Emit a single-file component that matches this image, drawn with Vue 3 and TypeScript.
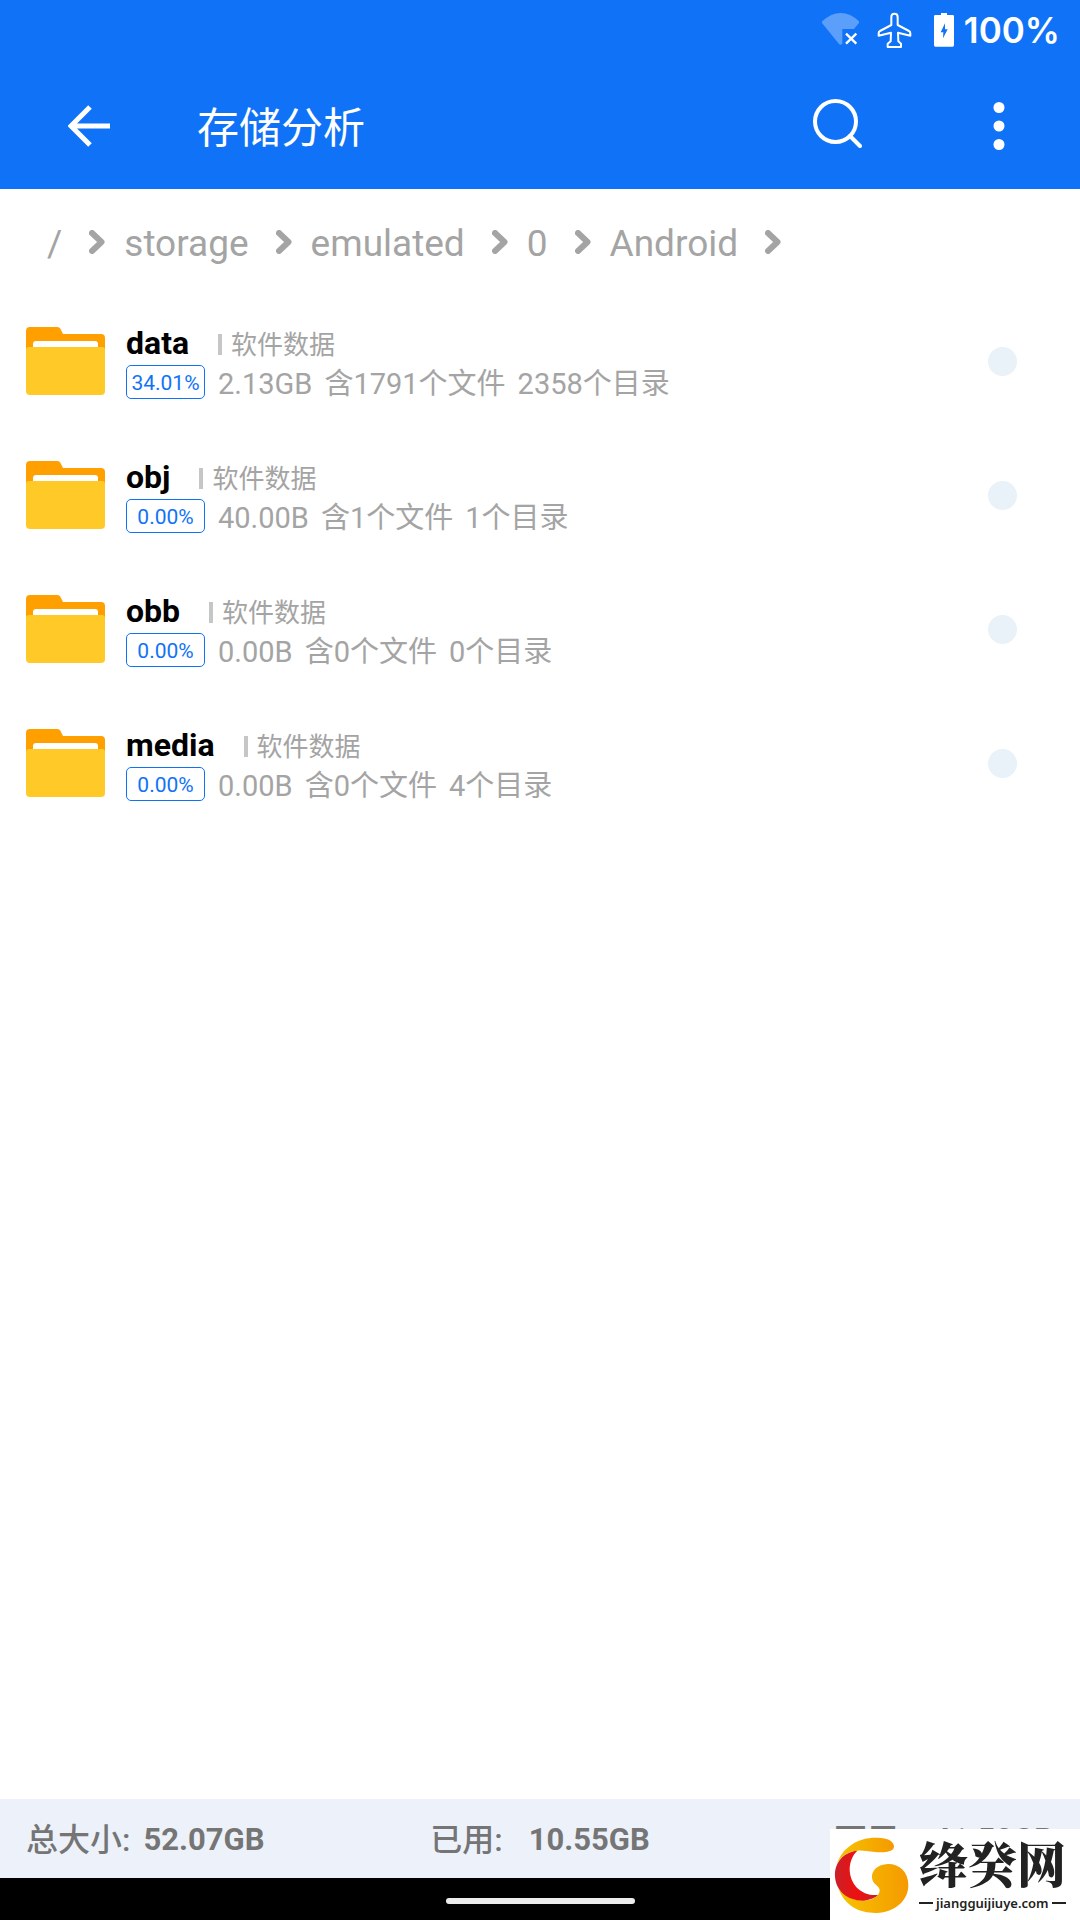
<script setup lang="ts">
interface Entry {
  name: string
  percent: string
  size: string
  files: number
  folders: number
}

const crumbs: string[] = ['/', 'storage', 'emulated', '0', 'Android']

const entries: Entry[] = [
  { name: 'data', percent: '34.01%', size: '2.13GB', files: 1791, folders: 2358 },
  { name: 'obj', percent: '0.00%', size: '40.00B', files: 1, folders: 1 },
  { name: 'obb', percent: '0.00%', size: '0.00B', files: 0, folders: 0 },
  { name: 'media', percent: '0.00%', size: '0.00B', files: 0, folders: 4 },
]

const totals = [
  { label: '总大小:', value: '52.07GB', wide: false },
  { label: '已用:', value: '10.55GB', wide: true },
  { label: '可用:', value: '41.52GB', wide: true },
]
</script>

<template>
  <div class="screen">
    <div class="status">
      <svg class="wifi" viewBox="123 36 114 114" aria-hidden="true">
        <path d="M127 67 Q153 42 182 42 Q211 42 237 67 Q238 70 236 73 L222 90 H187 V135 Q182 140 177 135 L126 72 Q125 69 127 67Z" fill="#5c9ffb" />
        <path d="M198 104 L229 134 M229 104 L198 134" stroke="#fff" stroke-width="7" fill="none" />
      </svg>
      <svg class="plane" viewBox="291 36 105 114" aria-hidden="true">
        <path d="M334 54 Q334 44 343.500 44 Q353 44 353 54 V78 L387 96 Q391 98 391 103 V110 L354 101 L355 127 L363 134 V144 H323 V134 L332 127 L333 101 L296 110 V103 Q296 98 300 96 L334 78Z" fill="none" stroke="#fff" stroke-width="6" stroke-linejoin="round" />
      </svg>
      <svg class="battery" viewBox="459 36 66 114" aria-hidden="true">
        <path d="M483 42 H501 V48 H518 Q522 48 522 52 V139 Q522 143 518 143 H466 Q462 143 462 139 V52 Q462 48 466 48 H483Z" fill="#fff" />
        <path d="M495 73 L482 100 H490 L489 118 L503 91 H495Z" fill="#1073f7" />
      </svg>
      <span class="level">100%</span>
    </div>

    <header class="bar">
      <button class="back" type="button" aria-label="返回">
        <svg viewBox="0 0 42 42"><path d="M42 21 H3 M22 2 L3 21 L22 40" fill="none" stroke="#fff" stroke-width="5" /></svg>
      </button>
      <h1 class="title">存储分析</h1>
      <button class="search" type="button" aria-label="搜索">
        <svg viewBox="0 0 49 49"><circle cx="22.500" cy="22.500" r="20.500" fill="none" stroke="#fff" stroke-width="4" /><path d="M37 37 L47 47" stroke="#fff" stroke-width="4" stroke-linecap="round" /></svg>
      </button>
      <button class="more" type="button" aria-label="更多">
        <svg viewBox="0 0 12 48"><circle cx="6" cy="5.500" r="5.500" /><circle cx="6" cy="24" r="5.500" /><circle cx="6" cy="42.500" r="5.500" /></svg>
      </button>
    </header>

    <nav class="crumbs">
      <template v-for="crumb in crumbs" :key="crumb">
        <a href="#">{{ crumb }}</a>
        <svg viewBox="0 0 16 24" aria-hidden="true"><path d="M3 3 L12.500 12 L3 21" fill="none" stroke="#a4a4a4" stroke-width="6" stroke-linecap="round" stroke-linejoin="round" /></svg>
      </template>
    </nav>

    <main class="list">
      <label v-for="entry in entries" :key="entry.name" class="row">
        <svg class="folder" viewBox="0 0 79 68" aria-hidden="true">
          <path d="M4 0 H31 Q34 0 35 3 L37 7 H75 Q79 7 79 11 V40 H0 V4 Q0 0 4 0Z" fill="#ffa000" />
          <path d="M7 24 V17 Q7 14 10 14 H69 Q72 14 72 17 V24Z" fill="#fff" />
          <path d="M3 20 H76 Q79 20 79 23 V64 Q79 68 75 68 H4 Q0 68 0 64 V23 Q0 20 3 20Z" fill="#ffca28" />
        </svg>
        <span class="info">
          <span class="line head">
            <strong>{{ entry.name }}</strong>
            <span class="tag">软件数据</span>
          </span>
          <span class="line">
            <span class="badge">{{ entry.percent }}</span>
            <span class="detail">
              <span>{{ entry.size }}</span>
              <span>含{{ entry.files }}个文件</span>
              <span>{{ entry.folders }}个目录</span>
            </span>
          </span>
        </span>
        <input class="pick" type="checkbox">
      </label>
    </main>

    <footer class="totals">
      <div v-for="total in totals" :key="total.label" class="total" :class="{ wide: total.wide }">
        <span class="label">{{ total.label }}</span>
        <span class="value">{{ total.value }}</span>
      </div>
    </footer>
    <div class="gesture"><span class="pill"></span></div>

    <aside class="stamp">
      <svg viewBox="102 164 228 234" aria-hidden="true">
        <defs>
          <linearGradient id="gold" x1="0" x2="1"><stop offset="0" stop-color="#f5c400" /><stop offset="1" stop-color="#f59a00" /></linearGradient>
          <linearGradient id="red" x1="0" x2="1"><stop offset="0" stop-color="#c9202a" /><stop offset="0.500" stop-color="#ee1010" /><stop offset="1" stop-color="#c8202a" /></linearGradient>
        </defs>
        <path d="M110 250 C128 192 182 168 228 169 C262 168 283 180 282 196 C281 212 250 214 225 212 C200 209 184 206 172 208 C140 210 120 228 110 250Z" fill="url(#gold)" />
        <path d="M114 315 C130 375 182 396 230 395 C285 393 325 358 325 312 C325 272 300 248 264 248 C232 249 214 268 216 290 C218 311 240 312 239 328 C238 340 225 356 190 358 C155 358 127 340 114 315Z" fill="url(#gold)" />
        <path d="M172 208 C130 212 103 244 105 285 C107 330 145 360 192 358 C212 356 226 349 234 341 C185 345 149 310 149 262 C150 240 158 221 172 208Z" fill="url(#red)" />
      </svg>
      <div class="stamp-text">
        <div class="stamp-name">绛癸网</div>
        <div class="stamp-site">jiangguijiuye.com</div>
      </div>
    </aside>
  </div>
</template>

<style>
body {
  margin: 0;
}
</style>

<style scoped>
.screen {
  position: relative;
  display: flex;
  flex-direction: column;
  min-height: 100vh;
  background: #fff;
  color: #a4a4a4;
  font-family: Roboto, "Noto Sans CJK SC", sans-serif;
}
svg {
  display: block;
  flex: none;
}
button {
  flex: none;
  padding: 0;
  border: 0;
  background: none;
}
.status {
  display: flex;
  align-items: center;
  justify-content: flex-end;
  box-sizing: border-box;
  height: 63px;
  padding: 0 20px 3px 0;
  background: #1073f7;
  color: #fff;
}
.wifi {
  width: 38px;
  margin-right: 18px;
}
.plane {
  width: 35px;
  margin-right: 21px;
}
.battery {
  width: 22px;
  margin-right: 9px;
}
.level {
  font: 600 35px/60px Inter, sans-serif;
}
.bar {
  display: flex;
  align-items: center;
  height: 126px;
  padding: 0 75px 0 68px;
  background: #1073f7;
  color: #fff;
}
.back {
  width: 42px;
}
.title {
  flex: 1;
  margin: 0;
  padding: 6px 0 0 87px;
  font-size: 42px;
  line-height: 60px;
  font-weight: 400;
}
.search {
  width: 49px;
  margin-right: 131px;
}
.search svg {
  margin-bottom: 6px;
}
.more {
  width: 12px;
}
.more svg {
  fill: #fff;
}
.crumbs {
  display: flex;
  align-items: center;
  box-sizing: border-box;
  height: 105px;
  padding: 4px 47px 0;
  font-size: 37px;
  line-height: 48px;
}
.crumbs a {
  margin-right: 27px;
  color: inherit;
  text-decoration: none;
}
.crumbs svg {
  width: 16px;
  margin: 0 19px 4px 0;
}
.list {
  flex: 1;
}
.row {
  display: flex;
  align-items: center;
  height: 134px;
  padding: 0 63px 0 26px;
}
.folder {
  width: 79px;
}
.info {
  display: flex;
  flex: 1;
  flex-direction: column;
  gap: 2px;
  padding-left: 21px;
}
.line {
  display: flex;
  align-items: center;
  height: 34px;
}
.head {
  height: 40px;
}
strong {
  color: #000;
  font-size: 32px;
  line-height: 40px;
  font-weight: 700;
}
.tag {
  display: flex;
  align-items: center;
  margin-left: 29px;
  padding-top: 4px;
  font-size: 26px;
  line-height: 40px;
}
.tag::before {
  width: 4px;
  height: 21px;
  margin: 0 9px 2px 0;
  background: #c6c6c6;
  content: "";
}
.badge {
  box-sizing: border-box;
  width: 79px;
  height: 34px;
  border: 1px solid #1073f7;
  border-radius: 5px;
  color: #1073f7;
  font-size: 21px;
  line-height: 34px;
  text-align: center;
}
.detail {
  display: flex;
  gap: 12px;
  margin-left: 13px;
  padding-top: 4px;
  font-size: 29px;
  line-height: 34px;
}
.pick {
  width: 29px;
  height: 29px;
  margin: 0;
  border-radius: 50%;
  background: #e9f1f9;
  appearance: none;
}
.totals {
  display: grid;
  grid-template-columns: 1fr 1fr auto;
  padding: 4px 26px 0;
  background: #edf2fa;
  color: #757575;
  font-size: 32px;
  line-height: 75px;
}
.total {
  display: flex;
  gap: 13px;
}
.label {
  font-weight: 500;
}
.value {
  font-size: 31px;
  line-height: 73px;
  font-weight: 700;
}
.wide {
  gap: 26px;
}
.gesture {
  display: flex;
  justify-content: center;
  height: 42px;
  background: #000;
}
.pill {
  width: 189px;
  height: 6px;
  margin-top: 20px;
  border-radius: 3px;
  background: #ececec;
}
.stamp {
  position: absolute;
  right: 0;
  bottom: 0;
  display: flex;
  align-items: center;
  box-sizing: border-box;
  width: 250px;
  height: 91px;
  padding-left: 4px;
  background: #fff;
  color: #222;
}
.stamp svg {
  width: 76px;
}
.stamp-text {
  padding-left: 9px;
}
.stamp-name {
  font: 900 49px/52px "Noto Serif CJK SC", "Noto Sans CJK SC", serif;
}
.stamp-site {
  display: flex;
  align-items: center;
  gap: 3px;
  margin-top: 5px;
  font: 600 13px/20px "Noto Sans", sans-serif;
}
.stamp-site::before,
.stamp-site::after {
  width: 14px;
  height: 2px;
  background: #222;
  content: "";
}
</style>
